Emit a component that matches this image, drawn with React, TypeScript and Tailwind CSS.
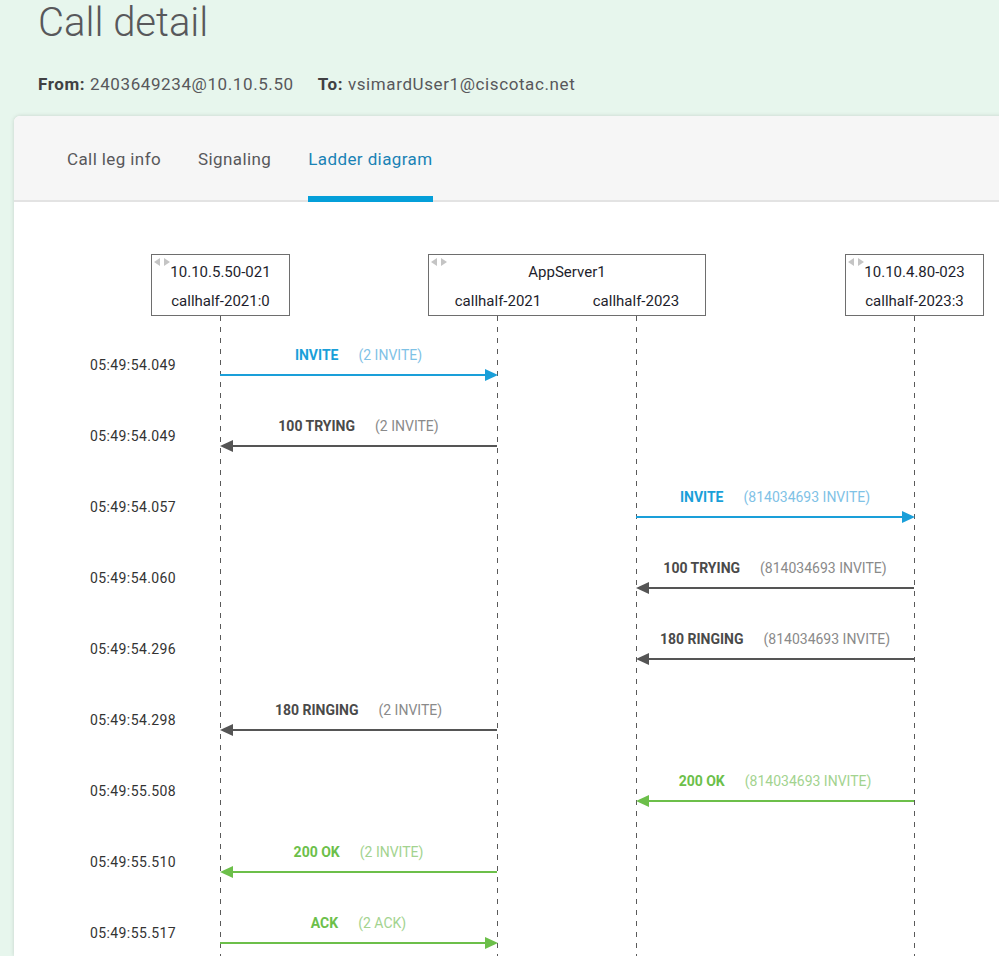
import React from "react"

type Msg = {
    time: string
    from: number
    to: number
    label: string
    note: string
    kind: "blue" | "gray" | "green"
}

// lifeline x positions inside the diagram body
const lanes = [206, 483, 622, 900]

const rowStart = 173
const rowStep = 71

const messages: Msg[] = [
    { time: "05:49:54.049", from: 0, to: 1, label: "INVITE", note: "(2 INVITE)", kind: "blue" },
    { time: "05:49:54.049", from: 1, to: 0, label: "100 TRYING", note: "(2 INVITE)", kind: "gray" },
    { time: "05:49:54.057", from: 2, to: 3, label: "INVITE", note: "(814034693 INVITE)", kind: "blue" },
    { time: "05:49:54.060", from: 3, to: 2, label: "100 TRYING", note: "(814034693 INVITE)", kind: "gray" },
    { time: "05:49:54.296", from: 3, to: 2, label: "180 RINGING", note: "(814034693 INVITE)", kind: "gray" },
    { time: "05:49:54.298", from: 1, to: 0, label: "180 RINGING", note: "(2 INVITE)", kind: "gray" },
    { time: "05:49:55.508", from: 3, to: 2, label: "200 OK", note: "(814034693 INVITE)", kind: "green" },
    { time: "05:49:55.510", from: 1, to: 0, label: "200 OK", note: "(2 INVITE)", kind: "green" },
    { time: "05:49:55.517", from: 0, to: 1, label: "ACK", note: "(2 ACK)", kind: "green" },
]

const palette = {
    blue: { line: "#1a9fd9", label: "text-[#1a9fd9]", note: "text-[#7fc2e6]" },
    gray: { line: "#555555", label: "text-[#4a4a4a]", note: "text-[#8a8a8a]" },
    green: { line: "#6cbf4a", label: "text-[#6cbf4a]", note: "text-[#a3d38f]" },
}

const nodes = [
    { left: 137, width: 139, title: "10.10.5.50-021", halves: ["callhalf-2021:0"] },
    { left: 414, width: 278, title: "AppServer1", halves: ["callhalf-2021", "callhalf-2023"] },
    { left: 831, width: 139, title: "10.10.4.80-023", halves: ["callhalf-2023:3"] },
]

function NodeBox({ left, width, title, halves }: { left: number; width: number; title: string; halves: string[] }) {
    return (
        <div
            className="absolute top-[52px] h-[62px] border-[1.5px] border-[#6e6e6e] bg-white flex flex-col text-[15px] text-[#1e1e2c]"
            style={{ left, width }}
        >
            {/* collapse / expand arrows */}
            <svg className="absolute left-[2px] top-[3px]" width="18" height="8" viewBox="0 0 18 8">
                <polygon points="0,4 6,0 6,8" fill="#c4c4c4" />
                <polygon points="10,0 16,4 10,8" fill="#c4c4c4" />
            </svg>
            <div className="h-[32px] flex items-center justify-center pt-[2px]">{title}</div>
            <div className="flex-1 flex items-center justify-around">
                {halves.map((h) => (
                    <span key={h}>{h}</span>
                ))}
            </div>
        </div>
    )
}

function Ladder() {
    return (
        <div className="relative h-[754px] bg-white overflow-hidden">
            <svg className="absolute left-0 top-0" width="990" height="754">
                {lanes.map((x) => (
                    <line key={x} x1={x + 0.5} y1={114} x2={x + 0.5} y2={754} stroke="#5a5a5a" strokeWidth="1" strokeDasharray="5 6" />
                ))}
                {messages.map((m, i) => {
                    const y = rowStart + i * rowStep
                    const x1 = lanes[m.from]
                    const x2 = lanes[m.to]
                    const dir = x2 > x1 ? 1 : -1
                    const tip = x2 + (dir > 0 ? 1 : 0)
                    const c = palette[m.kind].line
                    return (
                        <g key={i}>
                            <line x1={x1} y1={y} x2={tip - dir * 10} y2={y} stroke={c} strokeWidth="2" />
                            <polygon
                                points={`${tip},${y} ${tip - dir * 13},${y - 6} ${tip - dir * 13},${y + 6}`}
                                fill={c}
                            />
                        </g>
                    )
                })}
            </svg>

            {nodes.map((n) => (
                <NodeBox key={n.title} {...n} />
            ))}

            {messages.map((m, i) => {
                const y = rowStart + i * rowStep
                const mid = (lanes[m.from] + lanes[m.to]) / 2
                const p = palette[m.kind]
                return (
                    <React.Fragment key={i}>
                        <div
                            className="absolute left-[76px] h-[20px] -translate-y-1/2 leading-[20px] text-[14px] tracking-[0.4px] text-[#333]"
                            style={{ top: y - 10 }}
                        >
                            {m.time}
                        </div>
                        <div
                            className="absolute h-[20px] -translate-x-1/2 -translate-y-1/2 flex items-center gap-[20px] whitespace-nowrap text-[14px] leading-[20px]"
                            style={{ left: mid, top: y - 20 }}
                        >
                            <span className={`font-bold ${p.label}`}>{m.label}</span>
                            <span className={p.note}>{m.note}</span>
                        </div>
                    </React.Fragment>
                )
            })}
        </div>
    )
}

export default function App() {
    const tabs = ["Call leg info", "Signaling", "Ladder diagram"]
    return (
        <div className="w-[999px] h-[956px] overflow-hidden bg-[#e7f6ed] font-['Roboto',_'Liberation_Sans',_sans-serif]">
            {/* Page header */}
            <div className="px-[38px] pt-[1px]">
                <h1 className="h-[71px] text-[40px] leading-[44px] font-light text-[#58585b]">Call detail</h1>
                <div className="h-[24px] leading-[24px] text-[17px] tracking-[0.6px] text-[#58585b] flex gap-[24px]">
                    <span>
                        <b className="font-bold text-[#404042]">From:</b> 2403649234@10.10.5.50
                    </span>
                    <span>
                        <b className="font-bold text-[#404042]">To:</b> vsimardUser1@ciscotac.net
                    </span>
                </div>
            </div>

            {/* Card */}
            <div className="mt-[20px] ml-[14px] w-[1000px] rounded-tl-[6px] bg-white shadow-[0_0_4px_rgba(0,0,0,0.15)] overflow-hidden">
                <div className="h-[86px] bg-[#f6f6f6] border-b-2 border-[#e3e3e3] flex pl-[53px] gap-[37px]">
                    {tabs.map((t) => {
                        const active = t === "Ladder diagram"
                        return (
                            <div key={t} className="relative h-full flex items-center pt-[4px] text-[17px] tracking-[0.4px]">
                                <span className={active ? "text-[#1a82b5]" : "text-[#58585b]"}>{t}</span>
                                {active && <div className="absolute left-0 right-0 bottom-[-2px] h-[6px] bg-[#049fd9]" />}
                            </div>
                        )
                    })}
                </div>
                <Ladder />
            </div>
        </div>
    )
}
